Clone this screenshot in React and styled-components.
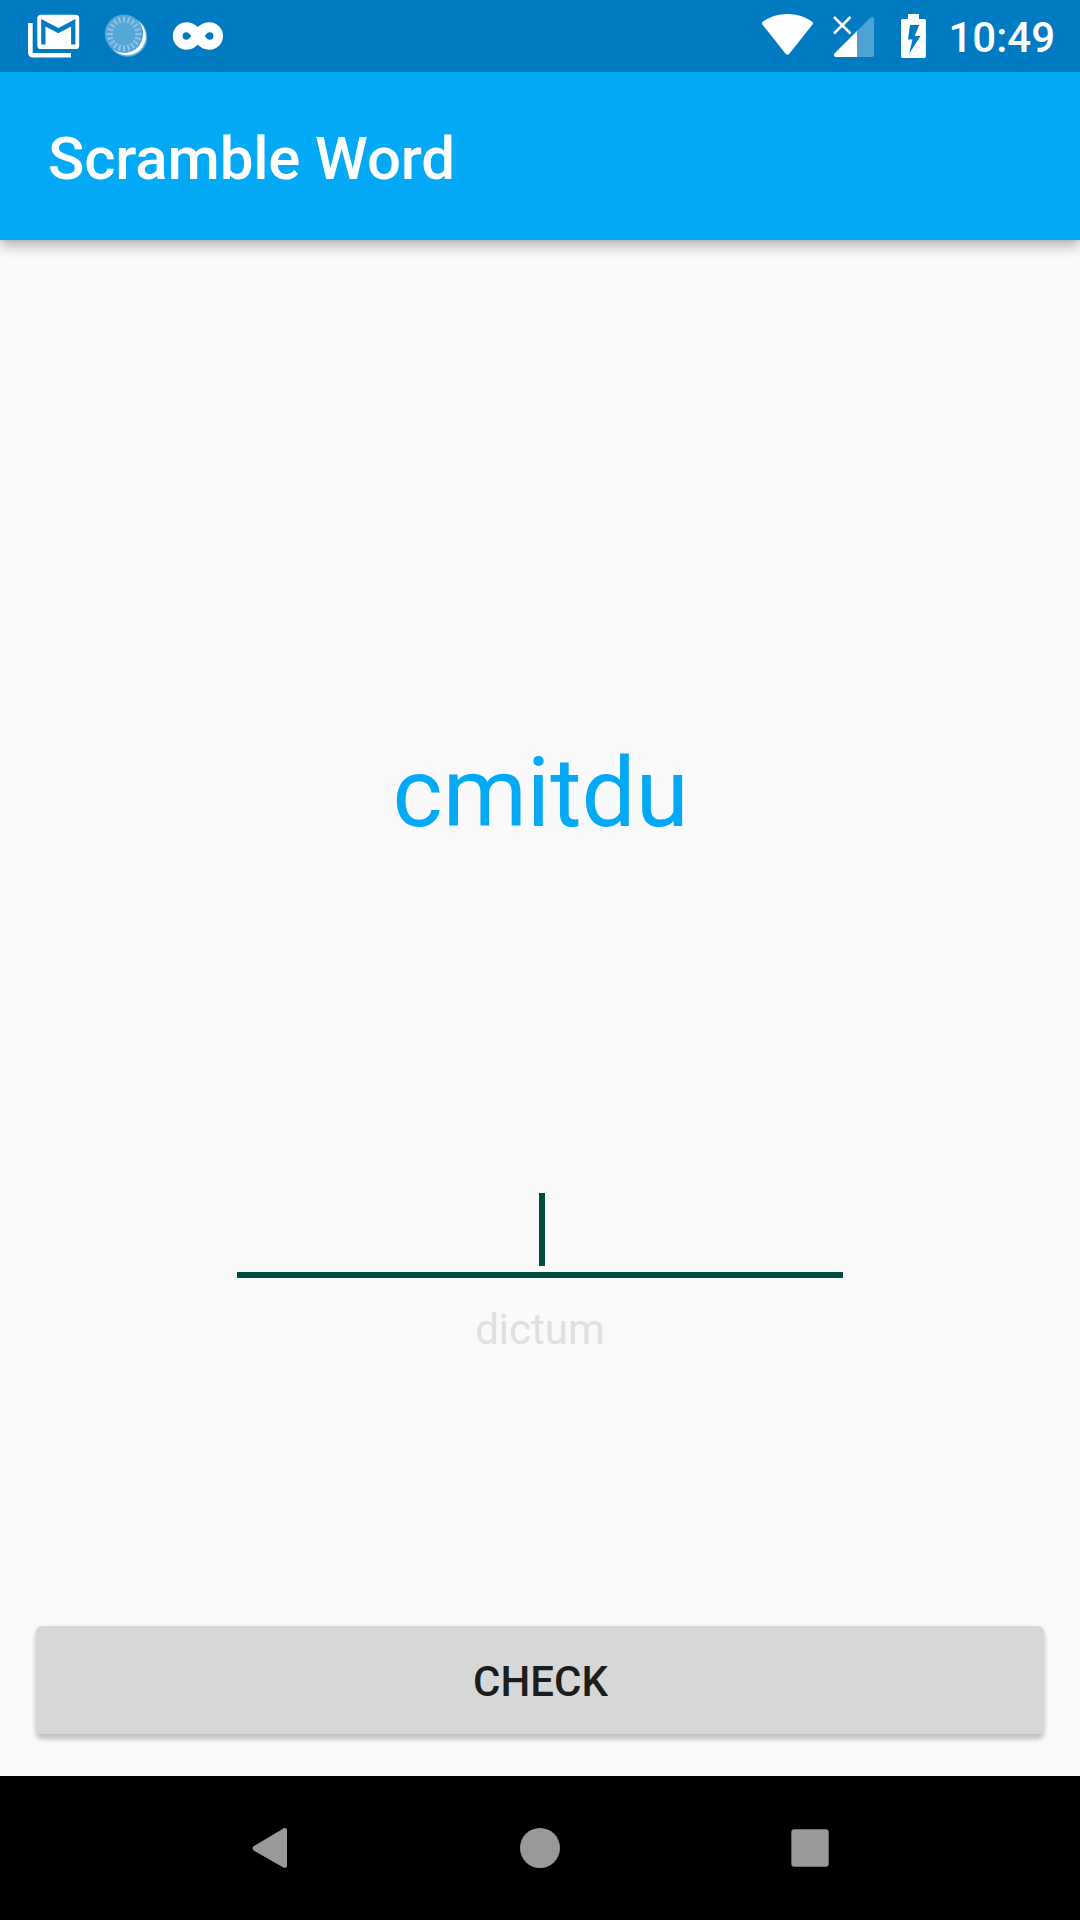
import React from "react";
import styled, { createGlobalStyle } from "styled-components";

const GlobalStyle = createGlobalStyle`
  *, *::before, *::after { box-sizing: border-box; }
  body {
    margin: 0;
    background: #fafafa;
    font-family: Roboto, "Noto Sans", sans-serif;
  }
`;

const Screen = styled.div`
  display: flex;
  flex-direction: column;
  width: 1080px;
  height: 1920px;
  overflow: hidden;
  background: #fafafa;
`;

const StatusBar = styled.header`
  display: flex;
  justify-content: space-between;
  flex: 0 0 72px;
  padding: 0 25px 0 24px;
  background: #007ac1;
  color: #fff;
  z-index: 1;
`;

const StatusGroup = styled.div`
  display: flex;
  align-items: center;
  gap: ${({ $gap }) => $gap}px;
`;

const Glyph = styled.svg`
  display: block;
  flex: none;
  fill: currentColor;
`;

const Clock = styled.time`
  padding-top: 3px;
  margin-left: 3px;
  font-size: 42px;
  font-weight: 500;
  line-height: 50px;
`;

const AppBar = styled.div`
  display: flex;
  align-items: center;
  flex: 0 0 168px;
  padding: 6px 48px 0;
  background: #03a9f4;
  box-shadow: 0 6px 12px rgba(0, 0, 0, 0.28), 0 0 3px rgba(0, 0, 0, 0.1);
`;

const Title = styled.h1`
  margin: 0;
  color: #fff;
  font-size: 60px;
  font-weight: 500;
  line-height: 70px;
  letter-spacing: -0.15px;
`;

const Content = styled.main`
  display: flex;
  flex-direction: column;
  align-items: center;
  flex: 1;
  padding: 497px 36px 42px;
`;

const Word = styled.p`
  margin: 0;
  padding-left: 1px;
  color: #03a9f4;
  font-size: 96px;
  line-height: 112px;
`;

const Field = styled.div`
  display: flex;
  justify-content: center;
  width: 606px;
  height: 85px;
  margin-top: 344px;
  padding-left: 4px;
  border-bottom: 6px solid #004d40;
`;

const Caret = styled.span`
  width: 6px;
  height: 73px;
  background: #004d40;
`;

const Hint = styled.p`
  margin: 27px 0 0;
  color: #e0e0e0;
  font-size: 42px;
  line-height: 50px;
`;

const CheckButton = styled.button`
  align-self: stretch;
  height: 108px;
  margin-top: auto;
  padding: 3px 0 0 1px;
  border: 0;
  border-radius: 6px;
  background: #d6d8d7;
  color: #1d1d1d;
  font: 500 42px/50px Roboto, "Noto Sans", sans-serif;
  box-shadow: 0 6px 4px rgba(0, 0, 0, 0.16), 0 2px 6px rgba(0, 0, 0, 0.12);
`;

const NavBar = styled.nav`
  display: flex;
  justify-content: center;
  align-items: center;
  gap: 222px;
  flex: 0 0 144px;
  background: #000;
  color: #999;
`;

const NavButton = styled.button`
  display: flex;
  width: 48px;
  height: 48px;
  padding: 0;
  border: 0;
  background: none;
  color: inherit;
`;

const SPOKES = Array.from({ length: 20 }, (_, i) => i * 18);

function MailIcon() {
  return (
    <Glyph width="56" height="72" viewBox="24 0 56 72">
      <path d="M28 23h4.700v30H71v4.500H32.500a4.500 4.500 0 0 1-4.500-4.500z" />
      <path
        fillRule="evenodd"
        d="M41 14.700h34.500a3.700 3.700 0 0 1 3.700 3.700v27a3.700 3.700 0 0 1-3.700 3.700H41a3.700 3.700 0 0 1-3.700-3.700v-27a3.700 3.700 0 0 1 3.700-3.700zM41.200 19v25.500h4.300V26.500l12.800 6.800 12.800-6.800v18h4.300V19l-17.100 9z"
      />
    </Glyph>
  );
}

function SpinnerIcon() {
  return (
    <Glyph width="48" height="72" viewBox="102 0 48 72">
      <circle cx="127.500" cy="37" r="19.700" opacity=".4" />
      <circle cx="126.800" cy="36.300" r="19" />
      <circle cx="124" cy="33.800" r="19.200" fill="#56a6d6" />
      <g stroke="#8fc3e3" strokeWidth="2">
        {SPOKES.map((a) => (
          <line key={a} x1="124" y1="16.500" x2="124" y2="22.500" transform={`rotate(${a} 124 34)`} />
        ))}
      </g>
    </Glyph>
  );
}

function InfinityIcon() {
  return (
    <Glyph width="54" height="72" viewBox="172 0 54 72">
      <path
        fillRule="evenodd"
        d="M186.500 22.300c4.500 0 8 1.700 11.300 4.700 3.300-3 7-4.700 11.500-4.700a13.700 13.700 0 0 1 0 27.400c-4.500 0-8.200-1.700-11.500-4.900-3.300 3.200-6.800 4.900-11.300 4.900a13.700 13.700 0 0 1 0-27.400zM186.300 32.300a3.700 3.700 0 0 0 0 7.400c2 0 3.200-1.500 5-3.700-1.800-2.200-3-3.700-5-3.700zM209.700 32.300c-2 0-3.200 1.500-5 3.700 1.800 2.200 3 3.700 5 3.700a3.700 3.700 0 0 0 0-7.400z"
      />
    </Glyph>
  );
}

function WifiIcon() {
  return (
    <Glyph width="54" height="72" viewBox="760 0 54 72">
      <path d="M787.500 14c9.800 0 18 3 24.700 7.800 1 .8 1 1.800.3 2.800L789.300 53.700c-1.200 1.500-2.500 1.500-3.700 0L762.400 24.600c-.7-1-.7-2 .3-2.800C769.500 17 777.700 14 787.500 14z" />
    </Glyph>
  );
}

function SignalIcon() {
  return (
    <Glyph width="44" height="72" viewBox="832 0 44 72">
      <path opacity=".3" d="M857 31l13.200-13.200c1.500-1.500 3.800-.8 3.800 1.300V55c0 1.200-.8 2-2 2h-15z" />
      <path d="M857 31v26h-21.300c-1.900 0-2.500-2-1.200-3.400z" />
      <path d="M834 17l16.500 16.500M850.500 17L834 33.500" stroke="currentColor" strokeWidth="2.500" />
    </Glyph>
  );
}

function BatteryIcon() {
  return (
    <Glyph width="33" height="72" viewBox="894 0 33 72">
      <path
        fillRule="evenodd"
        d="M908 14h11v5h5.200c1 0 1.700.7 1.700 1.700v35.600c0 1-.7 1.700-1.700 1.700h-21.500c-1 0-1.700-.7-1.700-1.700V20.700c0-1 .7-1.700 1.700-1.700h5.300zM910 25l-2 14.500h4.500l-3.500 14.500 11.500-18h-5.700l4.400-11z"
      />
    </Glyph>
  );
}

function BackIcon() {
  return (
    <Glyph width="48" height="48" viewBox="246 1824 48 48">
      <path d="M253.600 1846.200l29.800-17.700c1.800-1 3.600-.2 3.600 1.800v35.400c0 2-1.800 2.800-3.600 1.800l-29.800-17.100c-1.500-1-1.500-3.200 0-4.200z" />
    </Glyph>
  );
}

function HomeIcon() {
  return (
    <Glyph width="48" height="48" viewBox="0 0 48 48">
      <circle cx="24" cy="24" r="20" />
    </Glyph>
  );
}

function RecentsIcon() {
  return (
    <Glyph width="48" height="48" viewBox="0 0 48 48">
      <rect x="5.300" y="5.300" width="37.400" height="37.400" rx="3" />
    </Glyph>
  );
}

export default function App() {
  return (
    <>
      <GlobalStyle />
      <Screen>
        <StatusBar>
          <StatusGroup $gap={22}>
            <MailIcon />
            <SpinnerIcon />
            <InfinityIcon />
          </StatusGroup>
          <StatusGroup $gap={18}>
            <WifiIcon />
            <SignalIcon />
            <BatteryIcon />
            <Clock>10:49</Clock>
          </StatusGroup>
        </StatusBar>
        <AppBar>
          <Title>Scramble Word</Title>
        </AppBar>
        <Content>
          <Word>cmitdu</Word>
          <Field>
            <Caret />
          </Field>
          <Hint>dictum</Hint>
          <CheckButton type="button">CHECK</CheckButton>
        </Content>
        <NavBar>
          <NavButton aria-label="Back">
            <BackIcon />
          </NavButton>
          <NavButton aria-label="Home">
            <HomeIcon />
          </NavButton>
          <NavButton aria-label="Recents">
            <RecentsIcon />
          </NavButton>
        </NavBar>
      </Screen>
    </>
  );
}
